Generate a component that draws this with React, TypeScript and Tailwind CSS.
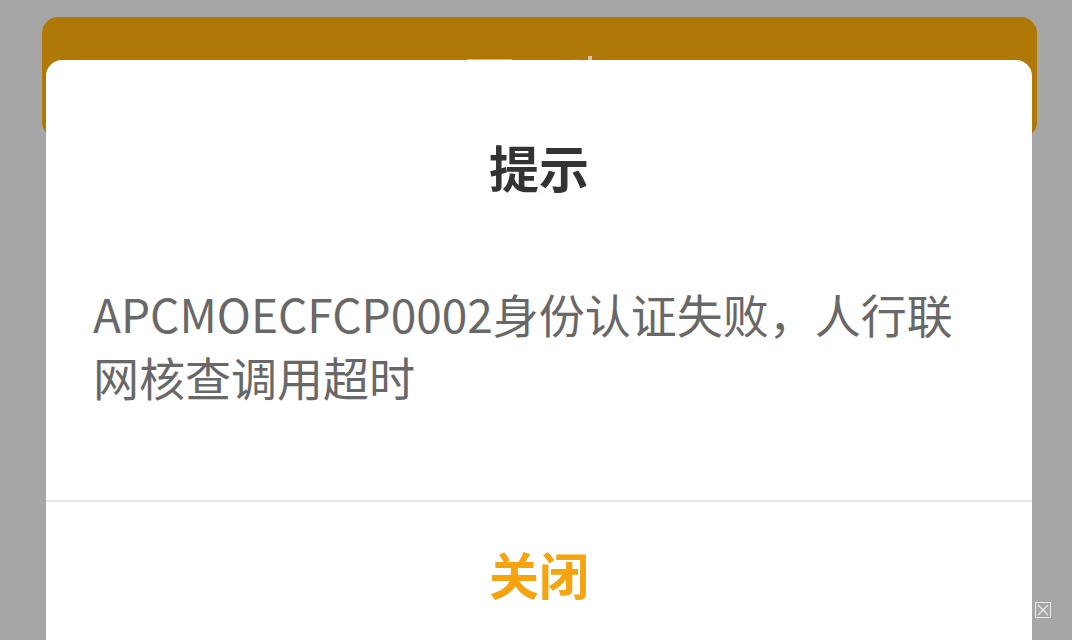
import React from 'react';

const cjk = { fontFamily: '"Noto Sans CJK SC", "Noto Sans", sans-serif' };

const App: React.FC = () => {
  return (
    <div className="relative h-[640px] w-[1072px] overflow-hidden bg-[#a6a6a6]" style={cjk}>
      {/* page behind the mask */}
      <div className="pl-[42px] pr-[35px] pt-[17px]">
        <div className="flex h-[121px] items-center justify-center rounded-[16px] bg-[#b07806] pb-[4px]">
          <span className="text-[50px] leading-none text-[#d9c9a6]">下一步</span>
        </div>
      </div>

      {/* dialog */}
      <div className="absolute left-[46px] top-[60px] w-[986px] rounded-[16px] bg-white">
        <div className="pt-[76px] text-center text-[50px] font-bold leading-[60px] text-[#333333]">提示</div>
        <div className="px-[47px] pb-[92px] pt-[86px] text-[46px] leading-[63px] text-[#686868]">
          APCMOECFCP0002身份认证失败，人行联网核查调用超时
        </div>
        <div className="h-[2px] bg-[#e6e6e6]" />
        <div className="flex justify-center pb-[60px] pt-[46px]">
          <span className="text-[50px] font-bold leading-none text-[#f5a40f]">关闭</span>
        </div>
      </div>

      {/* close mark */}
      <svg className="absolute left-[1035px] top-[602px]" width="16" height="16" viewBox="0 0 16 16" fill="none">
        <rect x="0.5" y="0.5" width="15" height="15" stroke="#ececec" strokeWidth="1" />
        <path d="M3 3 L13 13 M13 3 L3 13" stroke="#ececec" strokeWidth="1.2" />
      </svg>
    </div>
  );
};

export default App;
